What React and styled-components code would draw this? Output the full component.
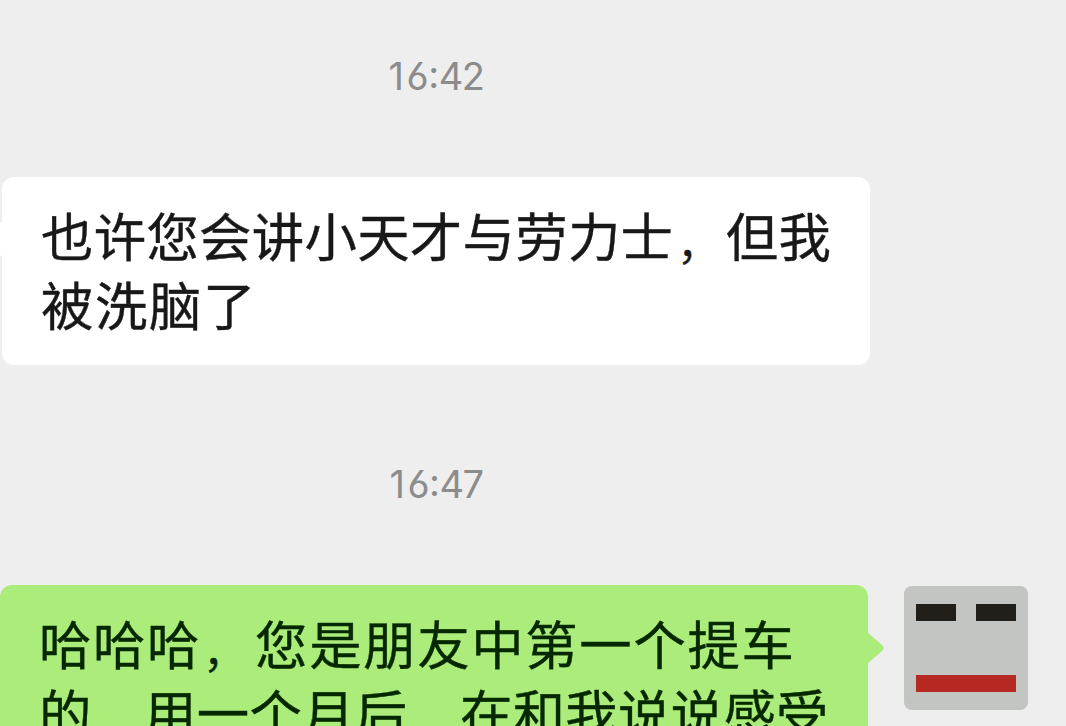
import React from 'react'
import styled, { createGlobalStyle } from 'styled-components'

const GlobalStyle = createGlobalStyle`
body {
  margin: 0;
  background: #eeeeee;
  overflow: hidden;
}
`
const Chat = styled.main`
width: 1066px;
height: 726px;
overflow: hidden;
background: #eeeeee;
font-family: "Noto Sans CJK SC", sans-serif;
`
const Time = styled.time`
display: block;
width: 872px;
box-sizing: border-box;
padding-top: ${props => props.$top}px;
height: ${props => props.$height}px;
font-family: Inter, "Noto Sans CJK SC", sans-serif;
font-feature-settings: "cv03";
font-size: 38px;
line-height: 48px;
letter-spacing: -1.5px;
color: #8c8c8c;
text-align: center;
`
const One = styled.span`
margin-right: 4px;
`
const Colon = styled.span`
vertical-align: 2px;
line-height: 1;
margin: 0 1px;
`
const Row = styled.div`
display: flex;
align-items: flex-start;
`
const Bubble = styled.div`
position: relative;
box-sizing: border-box;
width: 868px;
height: ${props => props.$height}px;
margin-left: ${props => props.$left}px;
padding: 23px 0 0 39px;
border-radius: 12px;
background: ${props => props.$sent ? '#abec7a' : '#ffffff'};
color: ${props => props.$sent ? '#062800' : '#181818'};
`
const Line = styled.div`
font-size: 52.4px;
line-height: 69px;
letter-spacing: ${props => props.$spacing || 0}px;
white-space: nowrap;
-webkit-text-stroke: 0.4px currentColor;
`
const Comma = styled.span`
display: inline-block;
width: 52.4px;
margin-right: ${props => props.$gap || 0}px;
padding-left: ${props => props.$gap ? 2 : 4}px;
box-sizing: border-box;
font-size: 42px;
line-height: 1;
letter-spacing: 0;
vertical-align: -3px;
`
const Tail = styled.svg`
position: absolute;
top: 46px;
left: 866px;
`
const LeftTail = styled.svg`
position: absolute;
top: 44px;
left: -2px;
`
const Avatar = styled.div`
display: flex;
flex-direction: column;
justify-content: space-between;
box-sizing: border-box;
width: 124px;
height: 124px;
margin: 1px 0 0 36px;
padding: 18px 12px;
border-radius: 8px;
background: #c3c5c2;
`
const Eyes = styled.div`
display: flex;
justify-content: space-between;
`
const Eye = styled.div`
width: 40px;
height: 17px;
background: #201f19;
`
const Mouth = styled.div`
height: 17px;
background: #b52922;
`

const App = () => {
  return (
    <Chat>
      <GlobalStyle />
      <Time $top={52} $height={177}><One>1</One>6<Colon>:</Colon>42</Time>
      <Row>
        <Bubble $height={188} $left={2}>
          <Line $spacing={0.3}>也许您会讲小天才与劳力士<Comma>，</Comma>但我</Line>
          <Line $spacing={1.6}>被洗脑了</Line>
          <LeftTail width='3' height='36'>
            <path d='M0 2 L3 0 V36 L0 34 Z' fill='#ffffff' />
          </LeftTail>
        </Bubble>
      </Row>
      <Time $top={95} $height={220}><One>1</One>6<Colon>:</Colon>47</Time>
      <Row>
        <Bubble $sent $height={260} $left={0}>
          <Line $spacing={1.65}>哈哈哈<Comma $gap={1.6}>，</Comma>您是朋友中第一个提车</Line>
          <Line $spacing={0.3}>的<Comma>，</Comma>用一个月后<Comma>，</Comma>在和我说说感受</Line>
          <Tail width='18' height='34'>
            <path d='M0 0 L17 15 Q18 17 17 19 L0 34 Z' fill='#abec7a' />
          </Tail>
        </Bubble>
        <Avatar>
          <Eyes>
            <Eye />
            <Eye />
          </Eyes>
          <Mouth />
        </Avatar>
      </Row>
    </Chat>
  )
}

export default App
